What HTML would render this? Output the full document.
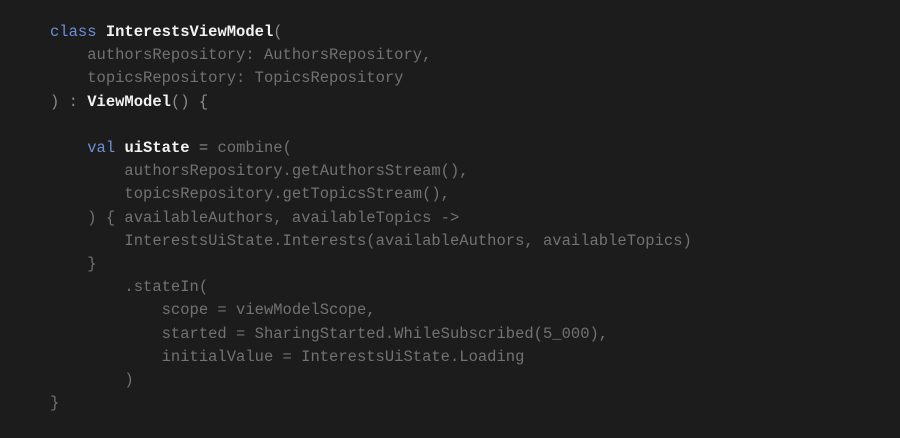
<!DOCTYPE html>
<html><head><style>
html,body{margin:0;padding:0;background:#1c1c1c;width:900px;height:438px;overflow:hidden}
pre{margin:0;position:absolute;left:50px;top:21px;font-family:"Liberation Mono",monospace;font-size:15.5px;line-height:23.2px;color:#777}
.k{color:#6d8fd6}.w{color:#f2f2f2;font-weight:bold}.g{color:#727272}.p{color:#8a8a8a}
</style></head><body>
<pre><span class="k">class</span> <span class="w">InterestsViewModel</span><span class="p">(</span>
    <span class="g">authorsRepository: AuthorsRepository,</span>
    <span class="g">topicsRepository: TopicsRepository</span>
<span class="p">) :</span> <span class="w">ViewModel</span><span class="p">() {</span>

    <span class="k">val</span> <span class="w">uiState</span> <span class="p">=</span> <span class="g">combine(</span>
        <span class="g">authorsRepository.getAuthorsStream(),</span>
        <span class="g">topicsRepository.getTopicsStream(),</span>
    <span class="g">) { availableAuthors, availableTopics -&gt;</span>
        <span class="g">InterestsUiState.Interests(availableAuthors, availableTopics)</span>
    <span class="g">}</span>
        <span class="g">.stateIn(</span>
            <span class="g">scope = viewModelScope,</span>
            <span class="g">started = SharingStarted.WhileSubscribed(5_000),</span>
            <span class="g">initialValue = InterestsUiState.Loading</span>
        <span class="g">)</span>
<span class="g">}</span></pre>
</body></html>
